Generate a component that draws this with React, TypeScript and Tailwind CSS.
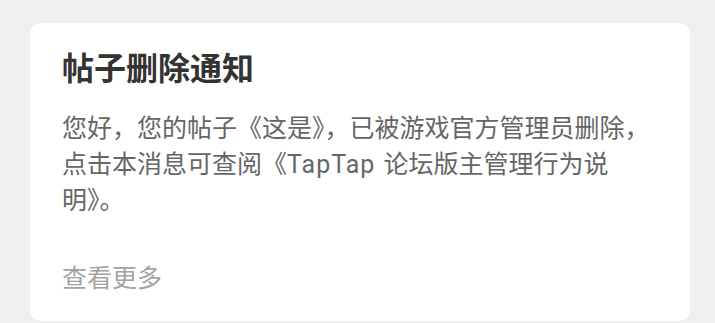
export default function App() {
  return (
    <div
      className="w-[715px] h-[323px] bg-[#efefef] overflow-hidden pt-[23px] pl-[30px] pr-[25px]"
      style={{ fontFamily: 'Roboto, "Noto Sans CJK SC", sans-serif' }}
    >
      <div className="bg-white rounded-[10px] h-[298px] pl-[32px] pt-[24px]">
        <h1 className="text-[32px] leading-[44px] font-bold text-[#333333]">帖子删除通知</h1>
        <p className="mt-[20px] w-[604px] text-[25px] leading-[36px] text-[#666666]">
          您好，您的帖子《这是》，已被游戏官方管理员删除，点击本消息可查阅《
          <span className="tracking-[1px] pr-[2px]">TapTap</span> 论坛版主管理行为说明》。
        </p>
        <div className="mt-[42px] text-[25px] leading-[36px] text-[#a3a3a3]">查看更多</div>
      </div>
    </div>
  );
}
